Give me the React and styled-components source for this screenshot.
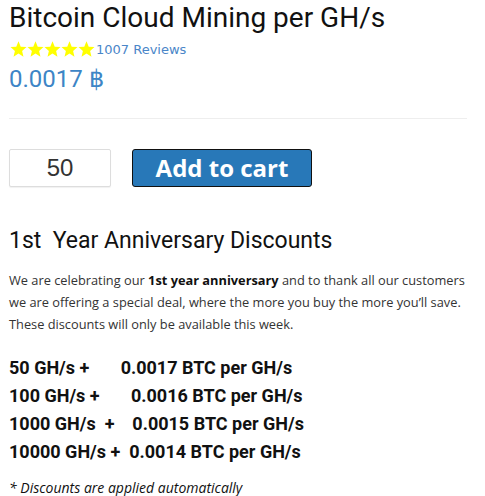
import React from "react";
import styled, { createGlobalStyle } from "styled-components";

const Global = createGlobalStyle`
  html, body { margin: 0; padding: 0; background: #fff; }
  body { font-family: "Open Sans", sans-serif; }
`;

const Page = styled.div`
  width: 460px;
  padding: 2px 0 0 9px;
`;

const Title = styled.h1`
  margin: 0;
  font-family: Roboto, sans-serif;
  font-weight: 400;
  font-size: 28px;
  line-height: 32px;
  color: #111;
`;

const RatingRow = styled.div`
  display: flex;
  align-items: center;
  height: 30px;
`;

const Stars = styled.div`
  display: flex;
  margin-left: 1px;
`;

const ReviewLink = styled.a`
  font-family: "DejaVu Sans", Verdana, sans-serif;
  font-size: 13px;
  color: #4a86c8;
  text-decoration: none;
  margin-left: 1px;
`;

const Price = styled.div`
  font-family: Roboto, sans-serif;
  font-size: 24px;
  line-height: 30px;
  color: #3d85c6;
`;

const Rule = styled.hr`
  width: 458px;
  margin: 24px 0 30px;
  border: 0;
  border-top: 1px solid #eee;
`;

const CartRow = styled.div`
  display: flex;
  gap: 21px;
  align-items: center;
`;

const Qty = styled.input`
  box-sizing: border-box;
  width: 102px;
  height: 38px;
  border: 1px solid #ddd;
  border-radius: 2px;
  box-shadow: 0 1px 1px rgba(0,0,0,0.06);
  text-align: center;
  font-family: "Liberation Sans", Arial, sans-serif;
  font-size: 24px;
  color: #333;
  padding: 0;
  outline: none;
`;

const CartButton = styled.button`
  box-sizing: border-box;
  width: 180px;
  height: 38px;
  background: #2878b8;
  border: 1px solid #111;
  border-radius: 3px;
  color: #fff;
  font-family: "Open Sans", sans-serif;
  font-weight: 700;
  font-size: 24px;
  line-height: 1;
  padding: 0;
  cursor: pointer;
`;

const Heading = styled.h2`
  margin: 40px 0 0;
  font-family: Roboto, sans-serif;
  font-weight: 400;
  font-size: 23px;
  line-height: 28px;
  color: #111;
  white-space: pre;
`;

const Para = styled.p`
  margin: 14px 0 0;
  font-family: "Open Sans", sans-serif;
  font-size: 12.8px;
  line-height: 22px;
  color: #333;
  b { font-weight: 700; color: #111; }
`;

const Tiers = styled.div`
  margin-top: 19px;
`;

const Tier = styled.div`
  font-family: Roboto, sans-serif;
  font-weight: 700;
  font-size: 18px;
  line-height: 28px;
  color: #111;
  white-space: pre;
`;

const Note = styled.p`
  margin: 11px 0 0;
  font-family: "Open Sans", sans-serif;
  font-style: italic;
  font-size: 14px;
  line-height: 22px;
  color: #111;
`;

const Star = () => (
  <svg width="17" height="16" viewBox="0 0 24 23">
    <polygon
      points="12,0.5 15.2,8.2 23.5,8.8 17.2,14.2 19.1,22.5 12,18 4.9,22.5 6.8,14.2 0.5,8.8 8.8,8.2"
      fill="#ffff00"
    />
  </svg>
);

const tiers = [
  "50 GH/s +       0.0017 BTC per GH/s",
  "100 GH/s +       0.0016 BTC per GH/s",
  "1000 GH/s  +    0.0015 BTC per GH/s",
  "10000 GH/s +  0.0014 BTC per GH/s",
];

export default function App() {
  return (
    <>
      <Global />
      <Page>
        <Title>Bitcoin Cloud Mining per GH/s</Title>
        <RatingRow>
          <Stars>
            {[0, 1, 2, 3, 4].map((i) => (
              <Star key={i} />
            ))}
          </Stars>
          <ReviewLink href="#">1007 Reviews</ReviewLink>
        </RatingRow>
        <Price>0.0017 ฿</Price>
        <Rule />
        <CartRow>
          <Qty defaultValue="50" />
          <CartButton>Add to cart</CartButton>
        </CartRow>
        <Heading>{"1st  Year Anniversary Discounts"}</Heading>
        <Para>
          We are celebrating our <b>1st year anniversary</b> and to thank all our
          customers we are offering a special deal, where the more you buy the
          more you’ll save. These discounts will only be available this week.
        </Para>
        <Tiers>
          {tiers.map((t) => (
            <Tier key={t}>{t}</Tier>
          ))}
        </Tiers>
        <Note>* Discounts are applied automatically</Note>
      </Page>
    </>
  );
}
